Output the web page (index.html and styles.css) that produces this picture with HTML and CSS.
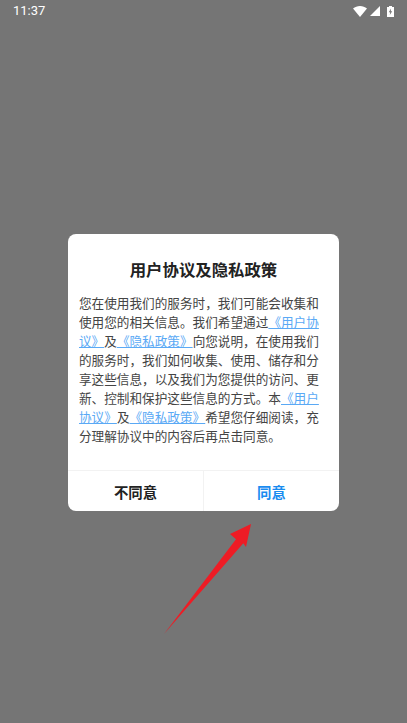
FILE: index.html
```html
<!DOCTYPE html>
<html lang="zh-CN">
<head>
<meta charset="utf-8">
<title>用户协议及隐私政策</title>
<link rel="stylesheet" href="styles.css">
</head>
<body>
<div class="screen">
  <header class="status">
    <span class="time">11:37</span>
    <span class="status-icons">
      <svg class="i-wifi" width="14" height="11" viewBox="0 0 14 11"><path d="M0 2.6C2 .9 4.4 0 7 0s5 .9 7 2.6L7 11z" fill="#fff"/></svg>
      <svg class="i-signal" width="10" height="10" viewBox="0 0 10 10"><path d="M10 0v10H0z" fill="#fff"/></svg>
      <svg class="i-batt" width="7" height="11" viewBox="0 0 7 11"><path fill-rule="evenodd" d="M2 0h3v1h2v10H0V1h2zM4 2.5 1.8 6.3h1.4L2.8 9 5.2 5.2H3.8z" fill="#fff"/></svg>
    </span>
  </header>
  <section class="dialog">
    <h1 class="title">用户协议及隐私政策</h1>
    <p class="body">您在使用我们的服务时，我们可能会收集和使用您的相关信息。我们希望通过<a class="link">《用户协议》</a>及<a class="link">《隐私政策》</a>向您说明，在使用我们的服务时，我们如何收集、使用、储存和分享这些信息，以及我们为您提供的访问、更新、控制和保护这些信息的方式。本<a class="link">《用户协议》</a>及<a class="link">《隐私政策》</a>希望您仔细阅读，充分理解协议中的内容后再点击同意。</p>
    <div class="actions">
      <button class="btn">不同意</button>
      <button class="btn primary">同意</button>
    </div>
  </section>
  <svg class="arrow" width="407" height="723" viewBox="0 0 407 723"><path d="M164 634 236 539.3 230 534 251 524 246 547 243.3 543.3z" fill="#ee1c25"/></svg>
</div>
</body>
</html>
```
FILE: styles.css
```css
* { box-sizing: border-box; }
html, body { margin: 0; padding: 0; }
body { font-family: "Noto Sans CJK SC", "Noto Sans", sans-serif; }
.screen {
  position: relative;
  width: 407px;
  height: 723px;
  background: #757575;
  overflow: hidden;
}
.status {
  height: 24px;
  padding: 0 13px 0 13px;
  display: flex;
  align-items: center;
  justify-content: space-between;
  color: #fff;
}
.time { font: 13px/24px Roboto, sans-serif; position: relative; top: -1px; }
.status-icons { display: flex; align-items: center; gap: 3px; position: relative; top: -1px; }
.i-batt { margin-left: 4px; }
.dialog {
  margin: 210px 68px 0;
  width: 271px;
  height: 277px;
  background: #fff;
  border-radius: 8px;
  display: flex;
  flex-direction: column;
  overflow: hidden;
}
.title {
  margin: 23px 0 0;
  font-size: 16.4px;
  line-height: 24px;
  font-weight: 700;
  color: #222;
  text-align: center;
}
.body {
  margin: 12px 0 0;
  padding: 0 0 0 11px;
  width: 251.6px;
  font-size: 12.63px;
  line-height: 19px;
  color: #444;
  flex: 1;
}
.link { color: #5aa9f5; text-decoration: underline; }
.actions {
  display: flex;
  height: 41px;
  border-top: 1px solid #f2f2f2;
}
.btn {
  flex: 1;
  border: 0;
  padding: 0;
  background: none;
  font-family: inherit;
  font-size: 14.4px;
  font-weight: 700;
  color: #222;
}
.btn + .btn { border-left: 1px solid #f2f2f2; }
.primary { color: #1a8cf0; }
.arrow { position: absolute; left: 0; top: 0; pointer-events: none; }
```
